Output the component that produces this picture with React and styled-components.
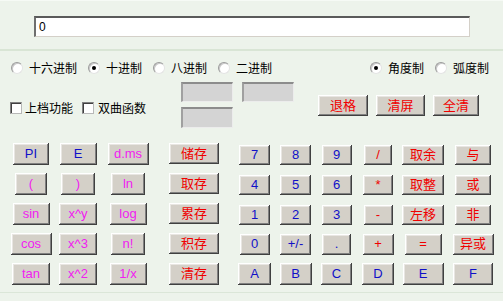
import React from "react";
import styled, { createGlobalStyle } from "styled-components";

const BLUE = "#1010c8";
const MAGENTA = "#f020f0";
const RED = "#f00000";

const GlobalStyle = createGlobalStyle`
  html, body {
    margin: 0;
    padding: 0;
    background: #edf3eb;
  }
  body {
    width: 503px;
    height: 301px;
    overflow: hidden;
    font-family: "Noto Sans CJK SC", "Liberation Sans", sans-serif;
  }
`;

const Window = styled.div`
  width: 503px;
  height: 301px;
  display: flex;
  flex-direction: column;
  background: #edf3eb;
`;

const TopPanel = styled.div`
  height: 51px;
  box-sizing: border-box;
  padding: 15px 0 0 34px;
  border-bottom: 2px solid #d9e5d5;
  border-top: 1px solid #f6faf5;
`;

const Display = styled.div`
  width: 436px;
  height: 21px;
  box-sizing: border-box;
  background: #fff;
  border-style: solid;
  border-width: 2px 1px 1px 2px;
  border-color: #5a5a5a #d4d0c8 #d4d0c8 #6e6e6e;
  font: 12px "Liberation Sans", sans-serif;
  line-height: 18px;
  padding-left: 3px;
  color: #000;
`;

const Lower = styled.div`
  flex: 1;
  display: flex;
  flex-direction: column;
  border-bottom: 1px solid #dbe6d8;
  margin-bottom: 8px;
`;

const RadioRow = styled.div`
  display: flex;
  justify-content: space-between;
  align-items: center;
  height: 14px;
  margin-top: 10px;
  padding: 0 14px 0 11px;
`;

const Group = styled.div`
  display: flex;
  align-items: center;
  gap: ${(p) => p.$gap || 11}px;
`;

const Option = styled.label`
  display: flex;
  align-items: center;
  gap: ${(p) => p.$gap || 6}px;
  font-size: 12px;
  line-height: 14px;
  white-space: nowrap;
  color: #000;
`;

const Radio = styled.span`
  flex: none;
  width: 12px;
  height: 12px;
  box-sizing: border-box;
  border-radius: 50%;
  background: #fff;
  border: 1px solid;
  border-color: #9a9a9a #e4e4e4 #e4e4e4 #9a9a9a;
  box-shadow: inset 1px 1px 0 #c8c8c8;
  display: flex;
  align-items: center;
  justify-content: center;
  &::after {
    content: "";
    width: 4px;
    height: 4px;
    border-radius: 50%;
    background: ${(p) => (p.$on ? "#000" : "transparent")};
  }
`;

const Check = styled.span`
  flex: none;
  width: 12px;
  height: 12px;
  box-sizing: border-box;
  background: #fff;
  border: 1px solid;
  border-color: #808080 #b8b8b8 #b8b8b8 #808080;
  box-shadow: inset 1px 1px 0 #404040;
`;

const ToolRow = styled.div`
  display: flex;
  align-items: flex-start;
  margin-top: 7px;
  padding-left: 10px;
`;

const CheckGroup = styled(Group)`
  flex: none;
  margin-top: 19px;
  width: 134px;
`;

const Fields = styled.div`
  flex: none;
  display: grid;
  grid-template-columns: 52px 52px;
  grid-auto-rows: 20px 21px;
  column-gap: 9px;
  row-gap: 5px;
  margin-left: 37px;
`;

const Field = styled.div`
  background: #d4d4d4;
  border-style: solid;
  border-width: 2px 1px 1px 2px;
  border-color: #8c8c8c #ececec #ececec #a0a0a0;
`;

const Actions = styled.div`
  display: flex;
  gap: 8px;
  margin: 13px 0 0 24px;
`;

const Keypad = styled.div`
  display: grid;
  grid-template-columns: 46px 48px 52px 80px 41px 41px 41px 42px 48px 52px;
  grid-auto-rows: 30px;
  justify-items: center;
  align-items: center;
  padding-left: 8px;
  margin-top: 11px;
`;

const Key = styled.button`
  width: ${(p) => p.$w}px;
  height: ${(p) => p.$h || 22}px;
  margin-top: ${(p) => (p.$dy || 0) * 2}px;
  padding: 0 0 1px;
  box-sizing: border-box;
  background: #d4d0c8;
  border: none;
  box-shadow: inset -1px -1px 0 #404040, inset 1px 1px 0 #ffffff,
    inset -2px -2px 0 #808080, inset 2px 2px 0 #e8e6e2;
  color: ${(p) => p.$color};
  font: 13px "Liberation Sans", "Noto Sans CJK SC", sans-serif;
  line-height: 1;
  display: flex;
  align-items: center;
  justify-content: center;
`;

const keys = [
  [["PI", 36, BLUE], ["E", 37, BLUE], ["d.ms", 41, MAGENTA], ["储存", 50, RED], ["7", 31, BLUE], ["8", 31, BLUE], ["9", 30, BLUE], ["/", 28, RED], ["取余", 42, RED], ["与", 36, RED]],
  [["(", 32, MAGENTA], [")", 34, MAGENTA], ["ln", 34, MAGENTA], ["取存", 50, RED], ["4", 31, BLUE], ["5", 31, BLUE], ["6", 30, BLUE], ["*", 30, RED], ["取整", 42, RED], ["或", 36, RED]],
  [["sin", 37, MAGENTA], ["x^y", 38, MAGENTA], ["log", 37, MAGENTA], ["累存", 50, RED], ["1", 31, BLUE], ["2", 31, BLUE], ["3", 30, BLUE], ["-", 29, RED], ["左移", 42, RED], ["非", 36, RED]],
  [["cos", 41, MAGENTA], ["x^3", 38, MAGENTA], ["n!", 34, MAGENTA], ["积存", 50, RED], ["0", 30, BLUE], ["+/-", 31, BLUE], [".", 29, BLUE], ["+", 31, RED], ["=", 37, RED], ["异或", 41, RED]],
  [["tan", 38, MAGENTA], ["x^2", 38, MAGENTA], ["1/x", 37, MAGENTA], ["清存", 50, RED], ["A", 33, BLUE], ["B", 32, BLUE], ["C", 31, BLUE], ["D", 32, BLUE], ["E", 41, BLUE], ["F", 40, BLUE]],
];

function keySize(row, col) {
  if (col < 3) return { h: 22, dy: 0 };
  if (col === 3) return { h: row === 4 ? 22 : 21, dy: row === 4 ? 0 : -0.5 };
  if (row === 0) return { h: 20, dy: 1 };
  if (row < 3) return { h: 20, dy: 0.5 };
  if (row === 3) return { h: 21, dy: 0 };
  return { h: 22, dy: 0 };
}

export default function App() {
  return (
    <Window>
      <GlobalStyle />
      <TopPanel>
        <Display>0</Display>
      </TopPanel>
      <Lower>
        <RadioRow>
          <Group>
            <Option><Radio />十六进制</Option>
            <Option><Radio $on />十进制</Option>
            <Option><Radio />八进制</Option>
            <Option><Radio />二进制</Option>
          </Group>
          <Group $gap={11}>
            <Option><Radio $on />角度制</Option>
            <Option><Radio />弧度制</Option>
          </Group>
        </RadioRow>
        <ToolRow>
          <CheckGroup $gap={9}>
            <Option $gap={3}><Check />上档功能</Option>
            <Option $gap={4}><Check />双曲函数</Option>
          </CheckGroup>
          <Fields>
            <Field />
            <Field />
            <Field />
          </Fields>
          <Actions>
            <Key $w={50} $h={21} $color={RED}>退格</Key>
            <Key $w={49} $h={21} $color={RED}>清屏</Key>
            <Key $w={46} $h={21} $color={RED}>全清</Key>
          </Actions>
        </ToolRow>
        <Keypad>
          {keys.map((row, r) =>
            row.map(([label, w, color], c) => {
              const { h, dy } = keySize(r, c);
              return (
                <Key key={`${r}-${c}`} $w={w} $h={h} $dy={dy} $color={color}>
                  {label}
                </Key>
              );
            })
          )}
        </Keypad>
      </Lower>
    </Window>
  );
}
